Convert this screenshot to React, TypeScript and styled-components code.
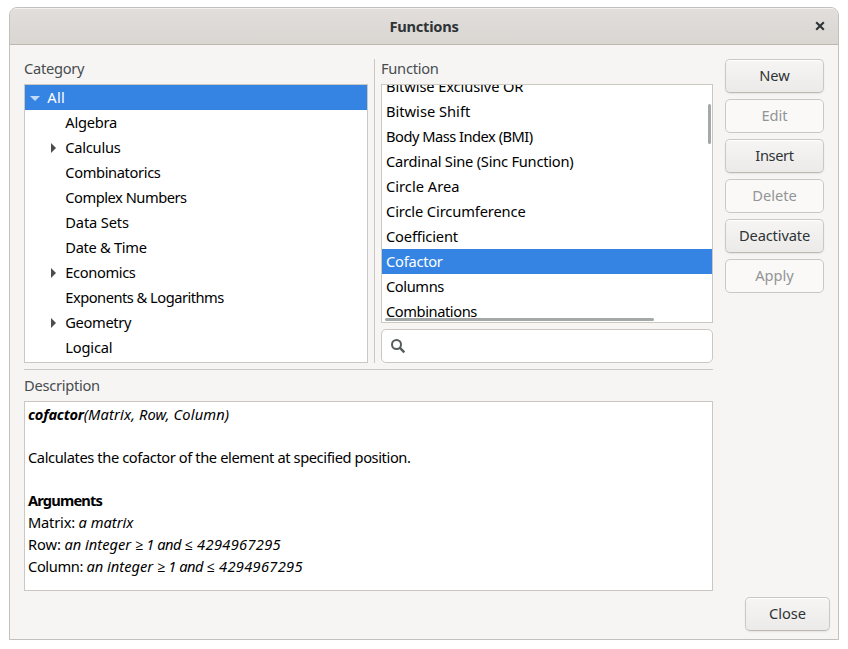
import React from "react";
import styled, { createGlobalStyle, css } from "styled-components";

const GlobalStyle = createGlobalStyle`
  * { box-sizing: border-box; }
  body {
    margin: 0;
    background: #fff;
    overflow: hidden;
    font-family: "Noto Sans", "Open Sans", sans-serif;
    font-size: 14.67px;
    color: #2e3436;
  }
`;

const Page = styled.div`
  width: 848px;
  height: 649px;
  padding: 7px 9px 9px;
`;

const Window = styled.main`
  width: 830px;
  height: 633px;
  display: flex;
  flex-direction: column;
  background: #f6f5f4;
  border: 1px solid #c1c0be;
  border-radius: 8px 8px 0 0;
  overflow: hidden;
`;

const TitleBar = styled.header`
  height: 37px;
  flex: none;
  display: grid;
  grid-template-columns: 36px 1fr 36px;
  align-items: center;
  border-bottom: 1px solid #bfb8b1;
  background: linear-gradient(to top, #dad6d2, #e1dedb);
  box-shadow: inset 0 1px #f3f2f1;
`;

const Title = styled.h1`
  grid-column: 2;
  margin: 0;
  text-align: center;
  font-size: 14.67px;
  line-height: 20px;
  font-weight: 700;
  letter-spacing: -0.25px;
`;

const CloseIconButton = styled.button`
  display: flex;
  align-items: center;
  justify-content: center;
  padding: 0;
  border: 0;
  background: none;
`;

const Body = styled.div`
  display: grid;
  grid-template-columns: 689px 99px;
  column-gap: 12px;
  padding: 14px 14px 0;
`;

const Main = styled.div`
  display: flex;
  flex-direction: column;
`;

const Lists = styled.div`
  display: grid;
  grid-template-columns: 344px 1px 332px;
  column-gap: 6px;
  height: 304px;
`;

const Column = styled.section`
  display: flex;
  flex-direction: column;
  min-width: 0;
`;

const Label = styled.h2`
  margin: 0;
  height: 25px;
  flex: none;
  font-size: 14.67px;
  font-weight: 400;
  line-height: 18px;
  letter-spacing: -0.27px;
  color: #474c4e;
`;

const Divider = styled.div<{ $horizontal?: boolean }>`
  background: #cbc7c3;
  ${(p) => p.$horizontal && css`height: 1px; margin: 6px 0;`}
`;

const Frame = styled.div<{ $height: number }>`
  position: relative;
  height: ${(p) => p.$height}px;
  flex: none;
  overflow: hidden;
  background: #fff;
  border: 1px solid #cbc7c1;
  color: #000;
`;

const Rows = styled.div<{ $scrolled?: boolean }>`
  margin-top: ${(p) => (p.$scrolled ? -11 : 0)}px;
`;

const Row = styled.div<{ $selected?: boolean; $indent?: number; $tracking?: number }>`
  display: flex;
  align-items: center;
  height: 25px;
  padding-left: ${(p) => p.$indent ?? 4}px;
  line-height: 25px;
  letter-spacing: ${(p) => p.$tracking ?? 0}px;
  white-space: nowrap;
  ${(p) => p.$selected && css`background: #3584e4; color: #fff;`}
`;

const Expander = styled.svg`
  width: 12px;
  height: 12px;
  flex: none;
  margin-right: 6.3px;
`;

const Scrollbar = styled.div<{ $vertical?: boolean }>`
  position: absolute;
  border-radius: 2px;
  background: #a5a8a9;
  ${(p) =>
    p.$vertical
      ? css`right: 1px; top: 19px; width: 3px; height: 40px;`
      : css`left: 3px; bottom: 1px; width: 269px; height: 3px;`}
`;

const Search = styled.label`
  display: flex;
  align-items: center;
  height: 34px;
  margin-top: 6px;
  padding-left: 8px;
  border: 1px solid #cdc7c2;
  border-radius: 5px;
  background: #fff;
`;

const SearchInput = styled.input`
  flex: 1;
  min-width: 0;
  border: 0;
  outline: 0;
  background: none;
`;

const Description = styled.div`
  padding: 1px 3px;
  line-height: 22px;
  white-space: nowrap;
`;

const Line = styled.p<{ $h?: number }>`
  margin: 0;
  height: ${(p) => p.$h ?? 22}px;
`;

const Text = styled.span<{ $tracking: number; $bold?: boolean; $italic?: boolean }>`
  letter-spacing: ${(p) => p.$tracking}px;
  font-weight: ${(p) => (p.$bold ? 700 : 400)};
  font-style: ${(p) => (p.$italic ? "italic" : "normal")};
`;

const Buttons = styled.div`
  display: flex;
  flex-direction: column;
  gap: 6px;
`;

const Button = styled.button<{ $tracking?: number }>`
  width: 100%;
  height: 34px;
  padding: 0 0 2px;
  border: 1px solid #cdc7c2;
  border-bottom-color: #bfb8b1;
  border-radius: 5px;
  background: linear-gradient(to top, #edebe9 2px, #f6f5f4);
  box-shadow: inset 0 1px #fff, 0 1px 2px rgba(0, 0, 0, 0.07);
  font: inherit;
  line-height: 20px;
  letter-spacing: ${(p) => p.$tracking ?? 0}px;
  color: #2e3436;
  &:disabled {
    border-color: #cdc7c2;
    background: #faf9f8;
    box-shadow: none;
    color: #929595;
  }
`;

const Actions = styled.footer`
  display: flex;
  justify-content: flex-end;
  padding: 6px 8px 0;
  & > ${Button} { width: 85px; }
`;

const categories = [
  { name: "Algebra", tracking: -0.25 },
  { name: "Calculus", tracking: -0.25, children: true },
  { name: "Combinatorics", tracking: -0.37 },
  { name: "Complex Numbers", tracking: -0.47 },
  { name: "Data Sets", tracking: -0.15 },
  { name: "Date & Time", tracking: -0.3 },
  { name: "Economics", tracking: -0.37, children: true },
  { name: "Exponents & Logarithms", tracking: -0.5 },
  { name: "Geometry", tracking: -0.35, children: true },
  { name: "Logical", tracking: -0.18 },
];

const functions = [
  { name: "Bitwise Exclusive OR", tracking: -0.1 },
  { name: "Bitwise Shift", tracking: 0 },
  { name: "Body Mass Index (BMI)", tracking: -0.5 },
  { name: "Cardinal Sine (Sinc Function)", tracking: -0.23 },
  { name: "Circle Area", tracking: 0.02 },
  { name: "Circle Circumference", tracking: -0.12 },
  { name: "Coefficient", tracking: -0.16 },
  { name: "Cofactor", tracking: -0.25 },
  { name: "Columns", tracking: -0.4 },
  { name: "Combinations", tracking: -0.42 },
];

const commands = [
  { name: "New", enabled: true },
  { name: "Edit", enabled: false },
  { name: "Insert", enabled: true, tracking: -0.4 },
  { name: "Delete", enabled: false },
  { name: "Deactivate", enabled: true, tracking: -0.15 },
  { name: "Apply", enabled: false },
];

function IntegerRange() {
  return (
    <>
      <Text $italic $tracking={0}>an integer </Text>
      <Text $italic $tracking={-0.45}>≥ 1 and </Text>
      <Text $italic $tracking={0.3}>≤ 4294967295</Text>
    </>
  );
}

export default function App() {
  return (
    <Page>
      <GlobalStyle />
      <Window>
        <TitleBar>
          <Title>Functions</Title>
          <CloseIconButton aria-label="Close window">
            <svg width="10" height="10" viewBox="0 0 10 10" stroke="#2e3436" strokeWidth="2.1">
              <path d="M1.2 1.2 8.8 8.8M8.8 1.2 1.2 8.8" />
            </svg>
          </CloseIconButton>
        </TitleBar>
        <Body>
          <Main>
            <Lists>
              <Column>
                <Label>Category</Label>
                <Frame $height={279}>
                  <Rows>
                    <Row $selected $indent={4} $tracking={0.3}>
                      <Expander viewBox="0 0 12 12"><path d="M1 4h10L6 9z" fill="#c2daf7" /></Expander>
                      All
                    </Row>
                    {categories.map((c) => (
                      <Row key={c.name} $indent={c.children ? 22 : 40.3} $tracking={c.tracking}>
                        {c.children && (
                          <Expander viewBox="0 0 12 12"><path d="M4 1v10l5-5z" fill="#4d4d4d" /></Expander>
                        )}
                        {c.name}
                      </Row>
                    ))}
                  </Rows>
                </Frame>
              </Column>
              <Divider />
              <Column>
                <Label>Function</Label>
                <Frame $height={239}>
                  <Rows $scrolled>
                    {functions.map((f) => (
                      <Row key={f.name} $selected={f.name === "Cofactor"} $tracking={f.tracking}>
                        {f.name}
                      </Row>
                    ))}
                  </Rows>
                  <Scrollbar $vertical />
                  <Scrollbar />
                </Frame>
                <Search>
                  <svg width="16" height="16" viewBox="0 0 16 16" fill="none" stroke="#575c5d">
                    <circle cx="6.5" cy="6.5" r="4.5" strokeWidth="2" />
                    <path d="M9.7 9.7 14.3 14.3" strokeWidth="2.4" />
                  </svg>
                  <SearchInput aria-label="Search functions" />
                </Search>
              </Column>
            </Lists>
            <Divider $horizontal />
            <Label>Description</Label>
            <Frame $height={190}>
              <Description>
                <Line>
                  <Text $bold $italic $tracking={-0.25}>cofactor</Text>
                  <Text $italic $tracking={0.14}>(Matrix, Row, Column)</Text>
                </Line>
                <Line $h={21} />
                <Line>
                  <Text $tracking={-0.4}>Calculates the cofactor of the element at specified position.</Text>
                </Line>
                <Line $h={21} />
                <Line><Text $bold $tracking={-0.85}>Arguments</Text></Line>
                <Line>
                  <Text $tracking={-0.2}>Matrix: </Text>
                  <Text $italic $tracking={0}>a matrix</Text>
                </Line>
                <Line><Text $tracking={-0.1}>Row: </Text><IntegerRange /></Line>
                <Line><Text $tracking={-0.38}>Column: </Text><IntegerRange /></Line>
              </Description>
            </Frame>
          </Main>
          <Buttons>
            {commands.map((c) => (
              <Button key={c.name} disabled={!c.enabled} $tracking={c.tracking}>{c.name}</Button>
            ))}
          </Buttons>
        </Body>
        <Actions>
          <Button>Close</Button>
        </Actions>
      </Window>
    </Page>
  );
}
